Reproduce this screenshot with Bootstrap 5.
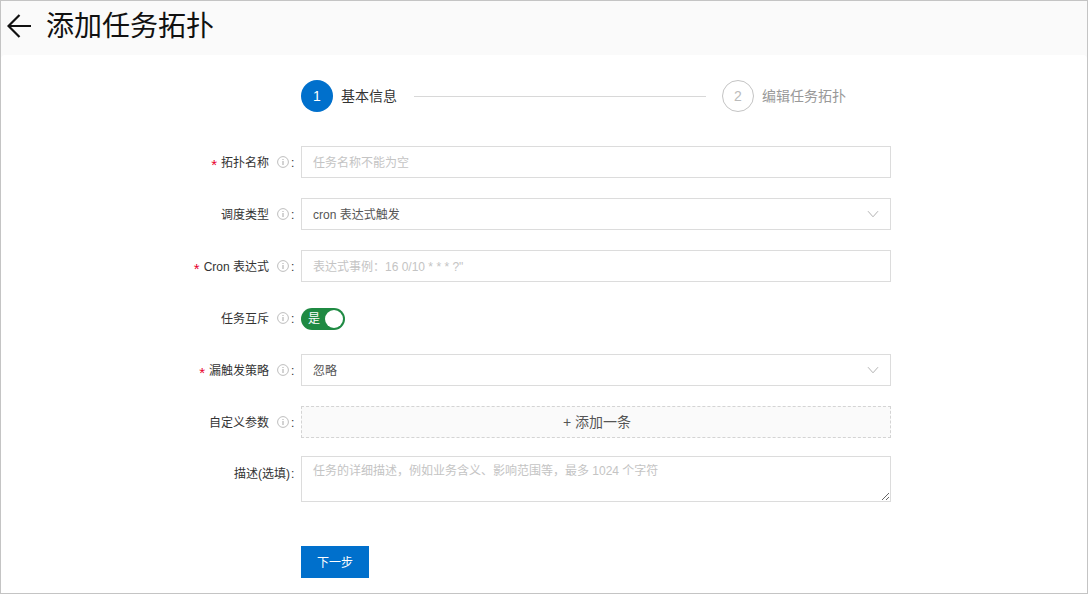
<!DOCTYPE html>
<html lang="zh">
<head>
<meta charset="utf-8">
<title>添加任务拓扑</title>
<link href="https://cdn.jsdelivr.net/npm/bootstrap@5.3.0/dist/css/bootstrap.min.css" rel="stylesheet">
<style>
html,body{height:100%;margin:0;background:#fff;overflow:hidden}
body{font-family:"Liberation Sans","Noto Sans CJK SC",sans-serif;font-size:12px;color:#333}
.form-control,.btn{font-family:"Liberation Sans","Noto Sans CJK SC",sans-serif}
.frame{height:594px;width:1088px;border:1px solid #c4c4c4;background:#fafafa;display:flex;flex-direction:column}
.pagehead{height:54px;padding:0 0 4px 6px;gap:15px}
.pagehead h1{font-size:28px;font-weight:400;color:#111;margin:0 0 4px;line-height:50px;font-family:"Noto Sans CJK SC",sans-serif}
.backarrow{width:24px;height:24px}
.sheet{flex:1;background:#fff;border-radius:4px 4px 0 0;padding-top:25px}
.stepper{margin-left:300px;width:580px;height:32px;margin-bottom:34px}
.stepdot{width:32px;height:32px;border-radius:50%;font-size:14px}
.stepon{background:#0070cc;color:#fff}
.stepoff{border:1px solid #c4c4c4;color:#bbb}
.steptext{font-size:14px;margin-left:8px;line-height:32px}
.steptextoff{color:#999}
.stepline{height:1px;background:#d8d8d8;width:292px;margin:0 16px 0 17px}
.formrow{height:32px;margin-bottom:20px}
.fieldlabel{width:300px;flex:none;justify-content:flex-end;color:#333;line-height:30px;padding:2px 6px 0 0}
.star{color:#e8002d;margin-right:4px;font-size:15px;line-height:1;padding-top:3px}
.infoicon{width:12px;height:12px;margin:0 1px 2px 8px;flex:none}
.colon{color:#333;margin-left:1px;margin-right:1px;width:3px}
.fieldbox{width:590px;height:32px;border:1px solid #dcdcdc;border-radius:0;padding:0 11px;font-size:12px;color:#555;line-height:30px;background:#fff;box-shadow:none}
input.fieldbox{padding-top:2px}
.fieldvalue{padding-top:2px}
.fieldbox::placeholder{color:#c4c4c4;opacity:1}
.fieldbox:focus{border-color:#dcdcdc;box-shadow:none}
.chev{width:12px;height:8px}
.togglewrap{padding-top:2px}
.toggle{width:44px;height:22px;border-radius:11px;background:#1f8a43;color:#fff;padding:0 2px 0 7px;font-size:12px}
.knob{width:18px;height:18px;border-radius:50%;background:#fff}
.addbox{width:590px;height:32px;border:1px dashed #d4d4d4;background:#fafafa;color:#555;font-size:14px;border-radius:0;padding:0 0 0 2px}
.addbox:hover{background:#fafafa;color:#555;border-color:#d4d4d4}
.addrow{margin-bottom:18px}
.descrow{height:46px;margin-bottom:44px}
.desclabel{padding-top:3px}
.descbox{height:46px;width:590px;border:1px solid #dcdcdc;border-radius:0;padding:5px 11px;font-size:12px;line-height:18px;min-height:0;resize:vertical}
.descbox::placeholder{color:#c4c4c4;opacity:1}
.descbox:focus{border-color:#dcdcdc;box-shadow:none}
.nextbtn{margin-left:300px;width:68px;height:32px;background:#0070cc;color:#fff;border:0;border-radius:0;font-size:12px;padding:2px 0 0}
.nextbtn:hover{background:#0070cc;color:#fff}
</style>
</head>
<body>
<svg width="0" height="0" class="d-none"><defs>
<symbol id="inf" viewBox="0 0 12 12"><circle cx="6" cy="6" r="5.4" fill="none" stroke="#bdbdbd"/><rect x="5.5" y="5" width="1" height="4" fill="#a8a8a8"/><rect x="5.5" y="3" width="1" height="1" fill="#a8a8a8"/></symbol>
<symbol id="chv" viewBox="0 0 12 8"><path d="M1 1.2 6 6.8 11 1.2" fill="none" stroke="#b4b4b4"/></symbol>
</defs></svg>
<div class="frame">
  <div class="pagehead d-flex align-items-center">
    <svg class="backarrow" viewBox="0 0 24 24"><path d="M24 12H1.5M12.5 1 1.5 12l11 11" fill="none" stroke="#111" stroke-width="2.2"/></svg>
    <h1>添加任务拓扑</h1>
  </div>
  <div class="sheet">
    <div class="stepper d-flex align-items-center">
      <div class="stepdot stepon d-flex align-items-center justify-content-center">1</div>
      <div class="steptext">基本信息</div>
      <div class="stepline"></div>
      <div class="stepdot stepoff d-flex align-items-center justify-content-center">2</div>
      <div class="steptext steptextoff">编辑任务拓扑</div>
    </div>
    <form>
      <div class="formrow d-flex">
        <div class="fieldlabel d-flex align-items-center"><span class="star">*</span>拓扑名称<svg class="infoicon"><use href="#inf"/></svg><span class="colon">:</span></div>
        <input class="form-control fieldbox" placeholder="任务名称不能为空">
      </div>
      <div class="formrow d-flex">
        <div class="fieldlabel d-flex align-items-center">调度类型<svg class="infoicon"><use href="#inf"/></svg><span class="colon">:</span></div>
        <div class="fieldbox d-flex align-items-center justify-content-between"><span class="fieldvalue">cron 表达式触发</span><svg class="chev"><use href="#chv"/></svg></div>
      </div>
      <div class="formrow d-flex">
        <div class="fieldlabel d-flex align-items-center"><span class="star">*</span>Cron 表达式<svg class="infoicon"><use href="#inf"/></svg><span class="colon">:</span></div>
        <input class="form-control fieldbox" placeholder="表达式事例：16 0/10 * * * ?&quot;">
      </div>
      <div class="formrow d-flex">
        <div class="fieldlabel d-flex align-items-center">任务互斥<svg class="infoicon"><use href="#inf"/></svg><span class="colon">:</span></div>
        <div class="togglewrap d-flex align-items-center"><div class="toggle d-flex align-items-center justify-content-between"><span>是</span><span class="knob"></span></div></div>
      </div>
      <div class="formrow d-flex">
        <div class="fieldlabel d-flex align-items-center"><span class="star">*</span>漏触发策略<svg class="infoicon"><use href="#inf"/></svg><span class="colon">:</span></div>
        <div class="fieldbox d-flex align-items-center justify-content-between"><span class="fieldvalue">忽略</span><svg class="chev"><use href="#chv"/></svg></div>
      </div>
      <div class="formrow addrow d-flex">
        <div class="fieldlabel d-flex align-items-center">自定义参数<svg class="infoicon"><use href="#inf"/></svg><span class="colon">:</span></div>
        <button type="button" class="btn addbox">+ 添加一条</button>
      </div>
      <div class="descrow d-flex">
        <div class="fieldlabel desclabel d-flex align-items-start">描述(选填)<span class="colon">:</span></div>
        <textarea class="form-control descbox" placeholder="任务的详细描述，例如业务含义、影响范围等，最多 1024 个字符"></textarea>
      </div>
      <button type="button" class="btn nextbtn d-block">下一步</button>
    </form>
  </div>
</div>
<script src="https://cdn.jsdelivr.net/npm/bootstrap@5.3.0/dist/js/bootstrap.bundle.min.js"></script>
</body>
</html>
